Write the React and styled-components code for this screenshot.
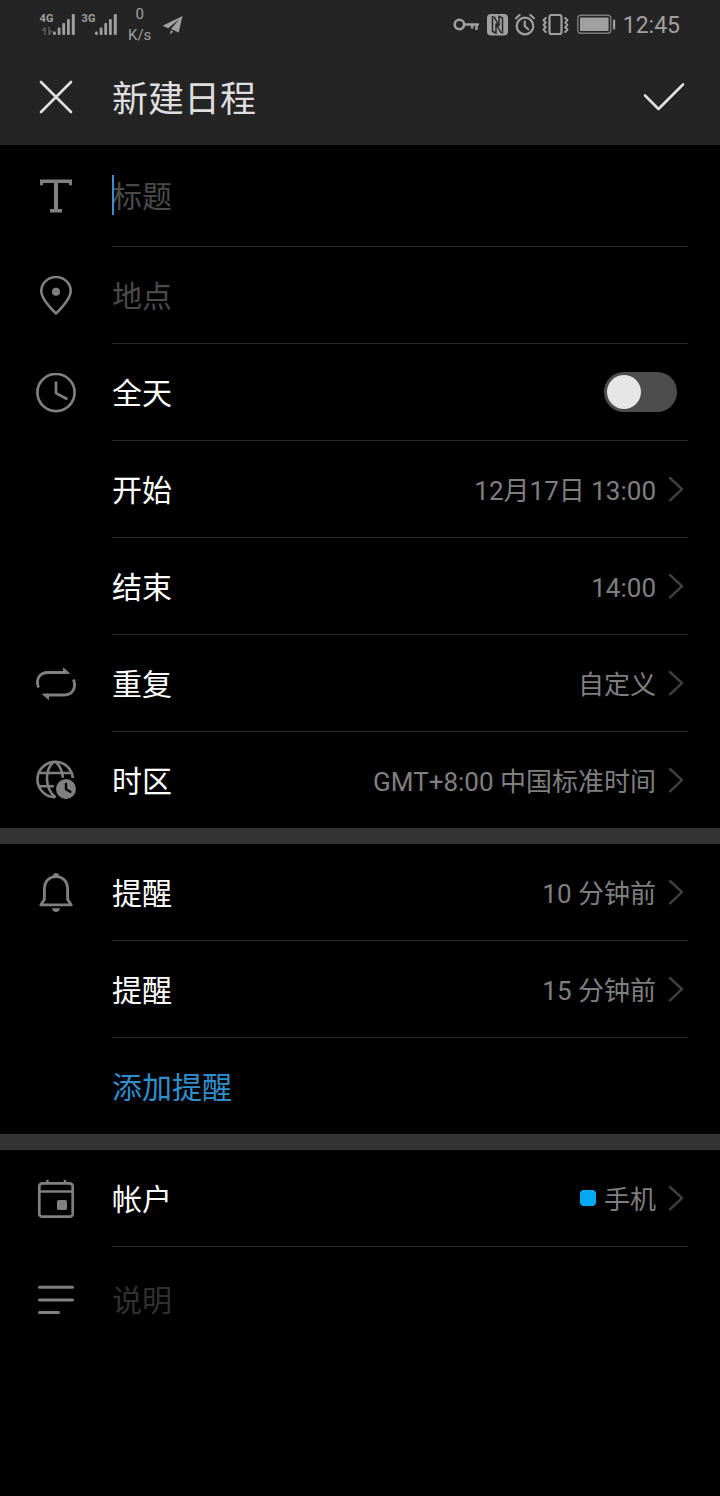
import { useState } from 'react';
import styled, { createGlobalStyle } from 'styled-components';

const GlobalStyle = createGlobalStyle`
    :root {
        --bar: #242424;
        --band: #333333;
        --line: #292929;
        --icon: #808080;
        --text: #ffffff;
        --value: #7f7f7f;
        --hint: #4a4a4a;
        --highlight: #2f8fcd;
    }
    * {
        box-sizing: border-box;
    }
    body {
        margin: 0;
        background-color: #000;
        color: var(--text);
        font-family: Roboto, 'Noto Sans CJK SC', sans-serif;
    }
    button,
    input {
        font-family: inherit;
    }
`;

const Header = styled.header`
    background-color: var(--bar);
`;

const StatusBar = styled.div`
    display: flex;
    align-items: center;
    justify-content: space-between;
    height: 49px;
    padding: 0px 40px;
    color: #a0a0a0;
`;

const StatusGroup = styled.div`
    display: flex;
    align-items: center;
    gap: 7px;
`;

const SignalBox = styled.div`
    display: flex;
    height: 22px;
`;

const SignalSide = styled.div`
    display: flex;
    flex-direction: column;
    align-items: center;
    justify-content: space-between;
    width: 13px;
`;

const SignalType = styled.span`
    font-size: 11px;
    line-height: 10px;
    font-weight: 700;
`;

const Speed = styled.div`
    margin: 0px 4px;
    font-size: 15px;
    line-height: 21px;
    text-align: center;
`;

const Time = styled.time`
    padding-top: 2px;
    font-size: 23px;
    line-height: 32px;
`;

const TitleBar = styled.div`
    display: grid;
    grid-template-columns: 112px 1fr 112px;
    align-items: center;
    height: 96px;
`;

const IconButton = styled.button`
    display: flex;
    align-items: center;
    justify-content: center;
    height: 96px;
    padding: 0px;
    border: none;
    background: none;
    color: #e0e0e0;
    cursor: pointer;
`;

const PageTitle = styled.h1`
    margin: 0px;
    padding-top: 6px;
    font-size: 36px;
    line-height: 48px;
    font-weight: 400;
    color: #dedede;
`;

const Section = styled.section`
    & + & {
        border-top: 16px solid var(--band);
    }
`;

const RowBox = styled.div`
    display: grid;
    grid-template-columns: 112px 1fr;
    padding-right: 32px;
`;

const RowIcon = styled.div`
    display: flex;
    align-items: center;
    justify-content: center;
    color: var(--icon);
`;

const RowBody = styled.div`
    position: relative;
    display: flex;
    align-items: center;
    justify-content: space-between;
    width: 100%;
    height: ${({ $tall }) => ($tall ? 102 : 97)}px;
    padding: 0px;
    border: none;
    border-bottom: 1px solid var(--line);
    background: none;
    text-align: left;

    ${Section} > ${RowBox}:last-child & {
        border-bottom-color: transparent;
        height: ${({ $tall }) => ($tall ? 106 : 96)}px;
    }
`;

const Label = styled.span`
    padding-top: 4px;
    font-size: 30px;
    line-height: 40px;
    color: ${({ $link }) => ($link ? 'var(--highlight)' : 'var(--text)')};
`;

const Value = styled.span`
    display: flex;
    align-items: center;
    gap: 8px;
    font-size: 26px;
    line-height: 36px;
    color: var(--value);
`;

const ValueText = styled.span`
    padding-top: 4px;
`;

const Swatch = styled.span`
    width: 16px;
    height: 16px;
    border-radius: 4px;
    background-color: #03a9f4;
`;

const TextInput = styled.input`
    width: 100%;
    height: 48px;
    padding: 2px 0px 0px;
    border: none;
    outline: none;
    background: none;
    font-size: 30px;
    color: var(--text);
    caret-color: var(--highlight);
    &::placeholder {
        color: ${({ $dim }) => ($dim ? '#303030' : 'var(--hint)')};
        opacity: 1;
    }
`;

const Caret = styled.span`
    position: absolute;
    left: 0px;
    top: 30px;
    width: 2px;
    height: 40px;
    background-color: #3b8fd0;
`;

const Switch = styled.input`
    appearance: none;
    display: flex;
    align-items: center;
    justify-content: ${({ checked }) => (checked ? 'flex-end' : 'flex-start')};
    width: 73px;
    height: 40px;
    margin: 0px 11px 0px 0px;
    padding: 0px 3px;
    border-radius: 20px;
    background-color: ${({ checked }) =>
        checked ? 'var(--highlight)' : '#4d4d4d'};
    cursor: pointer;
    &::before {
        content: '';
        width: 34px;
        height: 34px;
        border-radius: 50%;
        background-color: #e6e6e6;
    }
`;

const Svg = ({ w, h, sw = 3, children }) => (
    <svg
        width={w}
        height={h}
        viewBox={`0 0 ${w} ${h}`}
        fill="none"
        stroke="currentColor"
        strokeWidth={sw}
        strokeLinecap="round"
        strokeLinejoin="round"
        aria-hidden="true"
    >
        {children}
    </svg>
);

const icons = {
    title: (
        <Svg w={40} h={40}>
            <path
                d="M4 3.5h32v5.8h-3V7H22v26h4v3.500H14V33h4V7H7v2.300H4z"
                fill="currentColor"
                stroke="none"
            />
        </Svg>
    ),
    place: (
        <Svg w={40} h={40}>
            <path
                d="M20 37.5C15 32.3 5.3 23.3 5.3 14.900a14.700 13.900 0 0 1 29.400 0C34.700 23.300 25 32.300 20 37.500z"
                strokeWidth="2.6"
            />
            <circle cx="20" cy="15.7" r="4" fill="currentColor" stroke="none" />
        </Svg>
    ),
    clock: (
        <Svg w={40} h={40}>
            <circle cx="20" cy="19.5" r="18.6" strokeWidth="2.7" />
            <path d="M20 9.5v10.600l10.500 5.600" strokeWidth="2.7" />
        </Svg>
    ),
    repeat: (
        <Svg w={40} h={40}>
            <path
                d="M2.600 23.500C-.4 16.500 2.500 8.500 12 8.500h19M37.400 15.500c3 7 .1 15.500-9.400 15.500H9"
                strokeWidth="2.8"
                strokeLinecap="butt"
            />
            <path
                d="M27 3.200l7.600 6.500H27zM13 36.200l-7.600-6.500H13z"
                fill="currentColor"
                stroke="none"
            />
        </Svg>
    ),
    zone: (
        <Svg w={40} h={40}>
            <g strokeWidth="2.6" strokeLinecap="butt">
                <path d="M36.800 18A17.700 17.700 0 1 0 19.500 37.200" />
                <path d="M17.500 1.800C8.500 10 8.500 29 19.500 37.200M19.500 1.800c4.500 4 7 9.500 7.300 16M3.200 13h31.500M3.200 26.300h14.600" />
            </g>
            <circle cx="30" cy="29" r="10" fill="currentColor" stroke="none" />
            <path d="M30 24v5.200l4.400 2.600" stroke="#000" strokeWidth="2.4" />
        </Svg>
    ),
    bell: (
        <Svg w={40} h={40}>
            <path
                d="M8.400 26.500V16.500C8.400 8.500 13 3.600 20 3.600s11.600 4.900 11.600 12.900v10l3.600 5.300H4.800z"
                strokeWidth="2.8"
            />
            <path
                d="M16.800 3.600a3.200 3.600 0 0 1 6.400 0zM15.800 35.200h8.400c-.8 2.600-2.200 3.800-4.200 3.800s-3.400-1.200-4.200-3.800z"
                fill="currentColor"
                stroke="none"
            />
        </Svg>
    ),
    account: (
        <Svg w={40} h={40}>
            <rect x="3.3" y="4.3" width="33.4" height="33.4" rx="3" strokeWidth="2.7" />
            <path d="M3.300 12.500h33.400M11.400 4V2.200M29 4V2.200" strokeWidth="2.7" />
            <rect x="21" y="21" width="10" height="10" rx="1.8" fill="currentColor" stroke="none" />
        </Svg>
    ),
    note: (
        <Svg w={40} h={40}>
            <path d="M3.500 7.300h33M3.500 20h33M3.500 32.400h19" strokeWidth="3" />
        </Svg>
    ),
};

const Chevron = () => (
    <Svg w={24} h={28} sw={2.4}>
        <path d="M6 3l12 11.200L6 25.400" stroke="#404040" />
    </Svg>
);

const Signal = ({ type, data }) => (
    <SignalBox>
        <SignalSide>
            <SignalType>{type}</SignalType>
            {data && (
                <svg width="12" height="9" viewBox="0 0 12 9" fill="#505050" aria-hidden="true">
                    <path d="M3 0h2v8H3V4H0zM7 0h2v3l3 1-3 4H7z" />
                </svg>
            )}
        </SignalSide>
        <svg width="22" height="22" viewBox="0 0 22 22" fill="currentColor" aria-hidden="true">
            <rect x="0" y="17.5" width="2.8" height="3.5" rx="1.2" />
            <rect x="4.7" y="13.5" width="2.8" height="7.5" rx="1" />
            <rect x="9.3" y="9" width="2.8" height="12" rx="1" />
            <rect x="14" y="5" width="2.8" height="16" rx="1" />
            <rect x="18.8" y="0" width="3" height="21" rx="1" />
        </svg>
    </SignalBox>
);

const Row = ({ icon, label, value, swatch }) => (
    <RowBox>
        <RowIcon>{icons[icon]}</RowIcon>
        <RowBody as="button" type="button">
            <Label>{label}</Label>
            <Value>
                {swatch && <Swatch />}
                <ValueText>{value}</ValueText>
                <Chevron />
            </Value>
        </RowBody>
    </RowBox>
);

const InputRow = ({ icon, name, hint, tall, dim, caret }) => (
    <RowBox>
        <RowIcon as="label" htmlFor={name}>
            {icons[icon]}
        </RowIcon>
        <RowBody $tall={tall}>
            <TextInput
                id={name}
                type="text"
                placeholder={hint}
                aria-label={hint}
                $dim={dim}
            />
            {caret && <Caret />}
        </RowBody>
    </RowBox>
);

const App = () => {
    const [allDay, setAllDay] = useState(false);

    return (
        <>
            <GlobalStyle />
            <Header>
                <StatusBar>
                    <StatusGroup>
                        <Signal type="4G" data />
                        <Signal type="3G" />
                        <Speed>
                            <div>0</div>
                            <div>K/s</div>
                        </Speed>
                        <svg width="22" height="20" viewBox="0 0 22 20" fill="currentColor" aria-hidden="true">
                            <path d="M20.500 1L.5 10.800l5.700 2.400L17 4.600 9 14l7.700 3.600zM8.500 15.200v4.200l2.800-3z" />
                        </svg>
                    </StatusGroup>
                    <StatusGroup>
                        <svg width="27" height="22" viewBox="0 0 27 22" fill="none" stroke="currentColor" strokeWidth="2.6" aria-hidden="true">
                            <circle cx="6.400" cy="10.500" r="4.700" />
                            <path d="M11 10.500h15M23.500 10.500v5.500M19.200 10.500v4" />
                        </svg>
                        <svg width="21" height="22" viewBox="0 0 21 22" aria-hidden="true">
                            <rect x="0" y="0" width="21" height="21.500" rx="4" fill="currentColor" />
                            <path
                                d="M5.500 2v15.500l3.500 1.500V9.500l5 9.500M15.500 19.500V4L12 2.500V12L7 2.500"
                                fill="none"
                                stroke="#242424"
                                strokeWidth="1.500"
                            />
                        </svg>
                        <Svg w={20} h={22} sw={2.2}>
                            <circle cx="10" cy="12" r="8.300" />
                            <path d="M9.800 7.500v4.800l3.400 3M1 4.300L4.600 1M19 4.300L15.400 1" />
                        </Svg>
                        <Svg w={27} h={22} sw={2.2}>
                            <rect x="7.500" y="1" width="12" height="19" rx="2" />
                            <path
                                d="M3.800 4L1.500 6.300l2.300 2.300-2.300 2.300 2.300 2.300-2.300 2.300L3.800 18M23.200 4l2.300 2.300-2.300 2.300 2.300 2.300-2.300 2.300 2.300 2.300-2.300 2.500"
                                strokeWidth="2"
                            />
                        </Svg>
                        <svg width="40" height="22" viewBox="0 0 40 22" aria-hidden="true">
                            <rect x="1.800" y="1.300" width="33" height="18" rx="3" fill="none" stroke="#7c7c7c" strokeWidth="1.400" />
                            <rect x="4" y="3.500" width="28.600" height="13.600" rx="1" fill="currentColor" />
                            <rect x="37" y="5.500" width="2.200" height="10" rx="1" fill="currentColor" />
                        </svg>
                        <Time>12:45</Time>
                    </StatusGroup>
                </StatusBar>
                <TitleBar>
                    <IconButton type="button" aria-label="关闭">
                        <Svg w={36} h={36}>
                            <path d="M3 3l30 30M33 3L3 33" strokeWidth="2.600" />
                        </Svg>
                    </IconButton>
                    <PageTitle>新建日程</PageTitle>
                    <IconButton type="button" aria-label="保存">
                        <Svg w={44} h={32}>
                            <path d="M3 14.500l13.500 13.500L41 3.500" strokeWidth="2.600" />
                        </Svg>
                    </IconButton>
                </TitleBar>
            </Header>
            <main>
                <Section>
                    <InputRow icon="title" name="title" hint="标题" tall caret />
                    <InputRow icon="place" name="place" hint="地点" />
                    <RowBox>
                        <RowIcon>{icons.clock}</RowIcon>
                        <RowBody>
                            <Label as="label" htmlFor="allday">
                                全天
                            </Label>
                            <Switch
                                id="allday"
                                type="checkbox"
                                checked={allDay}
                                onChange={(e) => setAllDay(e.target.checked)}
                            />
                        </RowBody>
                    </RowBox>
                    <Row label="开始" value="12月17日 13:00" />
                    <Row label="结束" value="14:00" />
                    <Row icon="repeat" label="重复" value="自定义" />
                    <Row icon="zone" label="时区" value="GMT+8:00 中国标准时间" />
                </Section>
                <Section>
                    <Row icon="bell" label="提醒" value="10 分钟前" />
                    <Row label="提醒" value="15 分钟前" />
                    <RowBox>
                        <RowIcon />
                        <RowBody as="button" type="button">
                            <Label $link>添加提醒</Label>
                        </RowBody>
                    </RowBox>
                </Section>
                <Section>
                    <Row icon="account" label="帐户" value="手机" swatch />
                    <InputRow icon="note" name="note" hint="说明" tall dim />
                </Section>
            </main>
        </>
    );
};

export default App;
